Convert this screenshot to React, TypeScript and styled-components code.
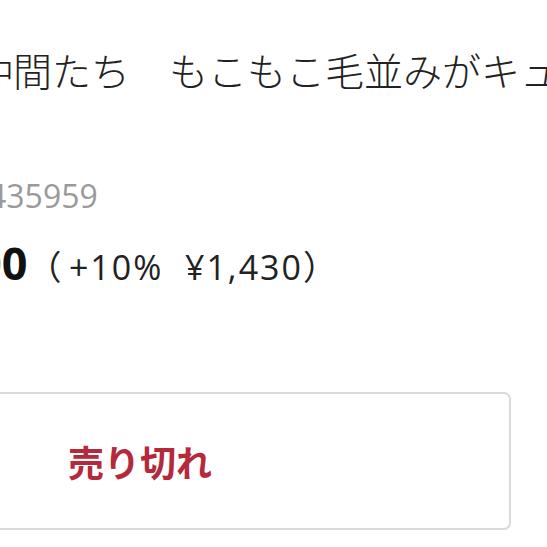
import React from "react";
import styled, { createGlobalStyle } from "styled-components";

const Global = createGlobalStyle`
  html, body {
    margin: 0;
    padding: 0;
    background: #ffffff;
    overflow: hidden;
  }
  body {
    font-family: "Noto Sans CJK JP", "Noto Sans", sans-serif;
    color: #222222;
  }
`;

const Page = styled.main`
  width: 547px;
  height: 547px;
  display: flex;
  flex-direction: column;
  overflow: hidden;
`;

const Title = styled.h1`
  margin: 50px 0 0 -26px;
  font-family: "Noto Sans CJK JP", sans-serif;
  font-size: 39px;
  line-height: 39px;
  font-weight: 300;
  color: #222222;
  white-space: pre;
`;

const Code = styled.div`
  margin: 91px 0 0 -12px;
  font-family: "Open Sans", "Noto Sans CJK JP", sans-serif;
  font-size: 32px;
  line-height: 32px;
  color: #9a9a9a;
  white-space: pre;
`;

const PriceRow = styled.div`
  margin: 28px 0 0 -114px;
  display: flex;
  align-items: baseline;
  white-space: pre;
  font-family: "Open Sans", "Noto Sans CJK JP", sans-serif;
`;

const Price = styled.span`
  font-size: 45px;
  line-height: 45px;
  font-weight: 700;
  color: #111111;
`;

const Tax = styled.span`
  font-size: 34px;
  line-height: 34px;
  letter-spacing: 2px;
  color: #222222;
`;

const SoldOut = styled.button`
  margin: 107px 0 0 -231px;
  width: 742px;
  height: 138px;
  flex: none;
  display: flex;
  align-items: center;
  justify-content: center;
  background: #ffffff;
  border: 2px solid #dadada;
  border-radius: 7px;
  font-family: "Noto Sans CJK JP", "Noto Sans", sans-serif;
  font-size: 36px;
  font-weight: 700;
  color: #b42a3c;
  padding: 0;
`;

export default function App() {
  return (
    <>
      <Global />
      <Page>
        <Title>仲間たち　もこもこ毛並みがキュートなぬいぐるみ</Title>
        <Code>435959</Code>
        <PriceRow>
          <Price>¥1,300</Price>
          <Tax>{"（\u200A+10%  ¥1,430）"}</Tax>
        </PriceRow>
        <SoldOut type="button">売り切れ</SoldOut>
      </Page>
    </>
  );
}
